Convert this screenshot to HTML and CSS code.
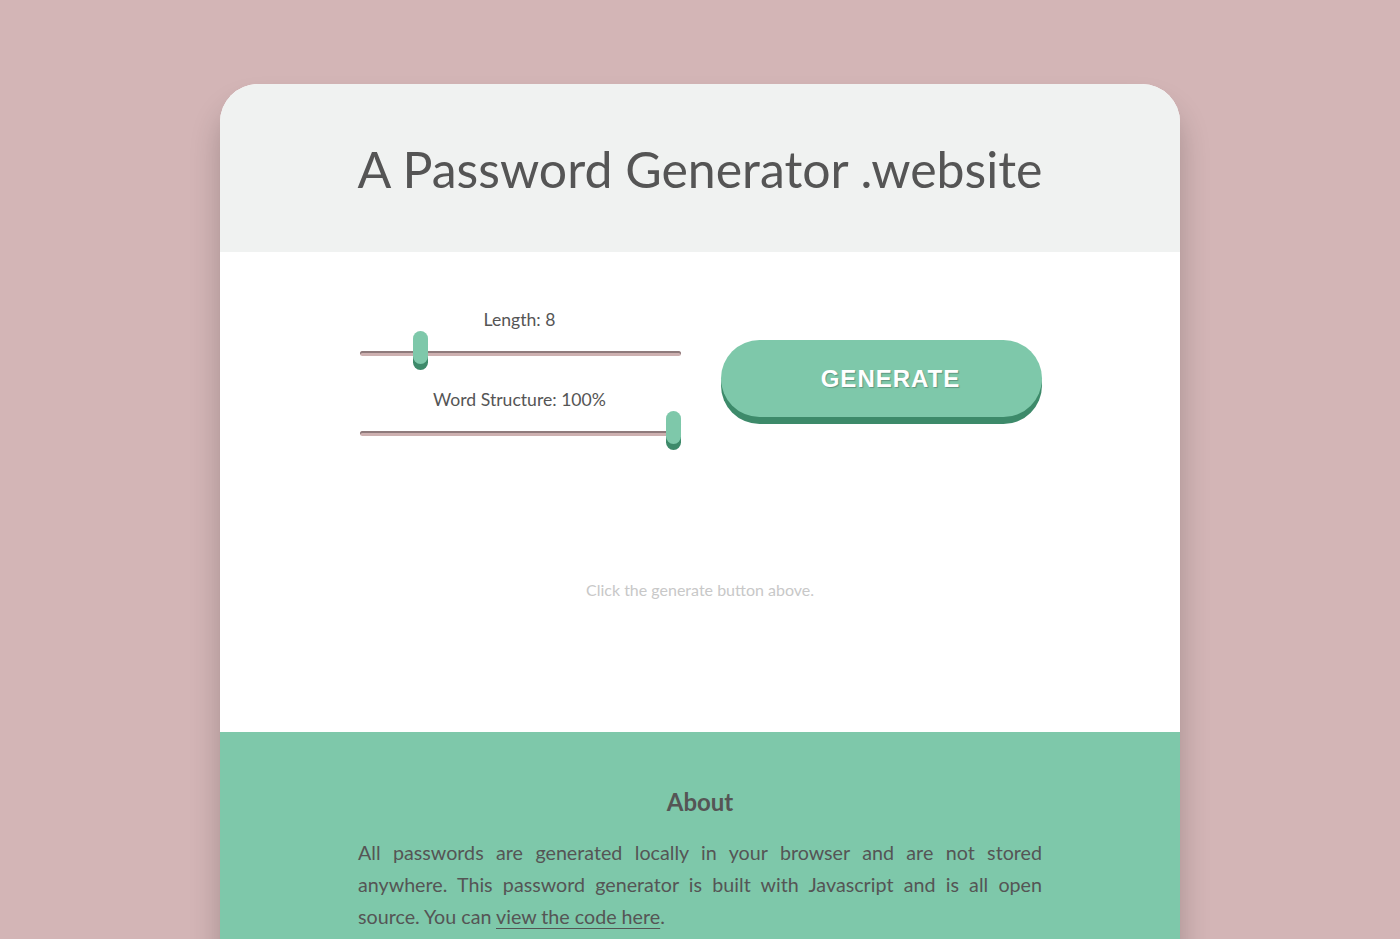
FILE: index.html
```html
<!DOCTYPE html>
<html lang="en">
<head>
<meta charset="utf-8">
<title>A Password Generator .website</title>
<link rel="stylesheet" href="styles.css">
</head>
<body>
<div class="card">
  <header class="card-header">
    <h1 class="title">A Password Generator .website</h1>
  </header>
  <main class="card-main">
    <div class="controls">
      <div class="sliders">
        <div class="slider-group">
          <label class="slider-label" for="length">Length: 8</label>
          <input class="slider" id="length" type="range" min="4" max="27" value="8">
        </div>
        <div class="slider-group">
          <label class="slider-label" for="structure">Word Structure: 100%</label>
          <input class="slider" id="structure" type="range" min="0" max="100" value="100">
        </div>
      </div>
      <div class="button-col">
        <button class="generate" type="button">GENERATE</button>
      </div>
    </div>
    <p class="result">Click the generate button above.</p>
  </main>
  <section class="about">
    <h2 class="about-title">About</h2>
    <p class="about-text">All passwords are generated locally in your browser and are not stored anywhere. This password generator is built with Javascript and is all open source. You can <a href="#" class="about-link">view the code here</a>.</p>
  </section>
</div>
</body>
</html>
```
FILE: styles.css
```css
* { box-sizing: border-box; }
html, body { margin: 0; padding: 0; }
body {
  background: #d3b5b6;
  font-family: Lato, "Open Sans", sans-serif;
  color: #555;
  overflow: hidden;
}
.card {
  width: 960px;
  margin: 84px auto 0;
  border-radius: 38px 38px 0 0;
  overflow: hidden;
  background: #fff;
  box-shadow: 0 22px 30px rgba(0, 0, 0, 0.22);
}
.card-header {
  height: 168px;
  background: #f0f2f1;
  display: flex;
  align-items: center;
  justify-content: center;
}
.title {
  margin: 0;
  font-weight: 400;
  font-size: 50px;
  color: #555;
  line-height: 1;
  padding-top: 2px;
}
.card-main {
  height: 480px;
  padding-top: 58px;
}
.controls {
  width: 684px;
  margin: 0 auto;
  padding-left: 2px;
  display: grid;
  grid-template-columns: 321px 321px;
  column-gap: 40px;
}
.slider-group {
  display: flex;
  flex-direction: column;
  align-items: center;
  margin-bottom: 14px;
}
.slider-label {
  font-size: 17.6px;
  line-height: 20px;
  height: 20px;
  color: #555;
  margin-right: 2px;
}
.slider {
  -webkit-appearance: none;
  appearance: none;
  width: 321px;
  height: 46px;
  margin: 0;
  background: transparent;
}
.slider:focus { outline: none; }
.slider::-webkit-slider-runnable-track {
  height: 5px;
  border-radius: 3px;
  background: #cdb0b0;
  box-shadow: inset 0 2px 0 #8e7a7b;
}
.slider::-webkit-slider-thumb {
  -webkit-appearance: none;
  appearance: none;
  width: 15px;
  height: 33px;
  margin-top: -20px;
  border-radius: 8px;
  background: #7ec8aa;
  box-shadow: 0 6px 0 #3d8a6a;
}
.button-col {
  padding-top: 30px;
}
.generate {
  width: 321px;
  height: 77px;
  border: none;
  border-radius: 40px;
  background: #7ec8aa;
  box-shadow: 0 7px 0 #3d8a6a;
  color: #fff;
  font-family: "Liberation Sans", Arial, sans-serif;
  font-weight: 700;
  font-size: 24px;
  letter-spacing: 1px;
  padding: 0 0 0 18px;
  text-shadow: 1px 1px 1px rgba(0, 0, 0, 0.25);
  cursor: pointer;
}
.result {
  margin: 110px 0 0;
  text-align: center;
  font-size: 16px;
  color: #c8c8c8;
}
.about {
  background: #7ec8aa;
  padding: 54px 138px 40px;
}
.about-title {
  margin: 0 0 19px;
  text-align: center;
  font-size: 24px;
  font-weight: 700;
  line-height: 32px;
  color: #555;
}
.about-text {
  margin: 0;
  font-size: 19.7px;
  line-height: 32px;
  text-align: justify;
  color: #555;
}
.about-link {
  color: #555;
  text-decoration: underline;
  text-underline-offset: 4px;
}
```
